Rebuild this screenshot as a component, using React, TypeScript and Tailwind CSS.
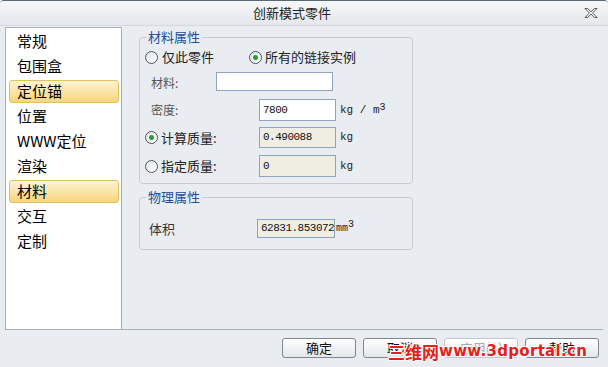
import React from 'react';

const CN = "font-['Noto_Sans_CJK_SC','Noto_Sans',sans-serif]";
const MONO = "font-['Liberation_Mono','DejaVu_Sans_Mono',monospace]";

const navItems = ['常规', '包围盒', '定位锚', '位置', 'WWW定位', '渲染', '材料', '交互', '定制'];
const activeItems = ['定位锚', '材料'];

function Radio({ checked }: { checked?: boolean }) {
  return (
    <span className="w-[13px] h-[13px] rounded-full border border-[#4d5866] bg-gradient-to-br from-[#dfe3e8] to-white flex items-center justify-center shrink-0">
      {checked && <span className="w-[5px] h-[5px] rounded-full bg-[#2f9a35]" />}
    </span>
  );
}

function Field({ value, width, readOnly }: { value: string; width: string; readOnly?: boolean }) {
  return (
    <div
      className={`${width} h-full border border-[#8ea4bd] px-[3px] flex items-center text-[11px] text-[#111] ${MONO} tracking-[-0.5px] ${
        readOnly ? 'bg-[#f0ede3]' : 'bg-white'
      }`}
    >
      {value}
    </div>
  );
}

function Unit({ children }: { children: React.ReactNode }) {
  return <span className={`ml-[4px] text-[11px] text-[#222] ${MONO}`}>{children}</span>;
}

function Button({ label, disabled }: { label: string; disabled?: boolean }) {
  return (
    <div
      className={`w-[74px] h-[20px] rounded-[3px] border flex items-center justify-center text-[13px] bg-gradient-to-b from-white to-[#e4e7eb] ${
        disabled ? 'border-[#c3c8ce] text-[#a7acb2]' : 'border-[#7d8793] text-[#111]'
      }`}
    >
      {label}
    </div>
  );
}

export default function App() {
  return (
    <div className={`w-[608px] h-[367px] bg-[#e9ecf0] flex flex-col relative overflow-hidden border-t border-[#5c6774] rounded-t-[4px] ${CN}`}>
      {/* title bar */}
      <div className="h-[25px] bg-gradient-to-b from-[#f6f7f9] to-[#e4e7eb] border-b border-[#d5d9de] flex items-center shrink-0">
        <div className="flex-1 pl-[253px] text-[13px] text-[#222]">创新模式零件</div>
        <svg width="14" height="12" viewBox="0 0 14 12" className="mr-[10px]">
          <path
            d="M1 1.5 L3.5 1.5 L7 4.8 L10.5 1.5 L13 1.5 L8.6 6 L13 10.5 L10.5 10.5 L7 7.2 L3.5 10.5 L1 10.5 L5.4 6 Z"
            fill="#fff"
            stroke="#444"
            strokeWidth="0.9"
          />
        </svg>
      </div>

      {/* body */}
      <div className="mx-[5px] mt-[1px] mr-[5px] h-[303px] flex border-b border-[#a9b1bb]">
        <div className="w-[117px] bg-white border-l border-t border-r border-[#a3b0c2] pt-[1px] flex flex-col">
          {navItems.map((item) => {
            const active = activeItems.includes(item);
            return (
              <div key={item} className="h-[25px] py-[1px] px-[3px] pr-[2px]">
                <div
                  className={`h-full flex items-center px-[7px] text-[15px] text-black rounded-[3px] border ${
                    active
                      ? 'border-[#e2bf62] bg-gradient-to-b from-[#fdf4d2] to-[#f7d57a]'
                      : 'border-transparent'
                  }`}
                >
                  {item}
                </div>
              </div>
            );
          })}
        </div>

        <div className="flex-1 pl-[17px] pt-[2px]">
          {/* material properties */}
          <fieldset className="w-[274px] border border-[#c7ccd3] rounded-[4px] pl-[5px] pb-[6px]">
            <legend className="ml-[1px] px-[2px] text-[13px] leading-[16px] text-[#1c4f9e]">材料属性</legend>
            <div className="h-[20px] mt-[2px] flex items-center text-[13px] text-[#222]">
              <Radio />
              <span className="ml-[4px]">仅此零件</span>
              <span className="ml-[35px]"><Radio checked /></span>
              <span className="ml-[3px]">所有的链接实例</span>
            </div>
            <div className="h-[19px] mt-[5px] flex items-center">
              <span className="w-[71px] pl-[6px] pt-[3px] text-[12px] text-[#555]">材料:</span>
              <Field value="" width="w-[117px]" />
            </div>
            <div className="h-[22px] mt-[8px] flex items-center">
              <span className="w-[114px] pl-[6px] text-[12px] text-[#555]">密度:</span>
              <Field value="7800" width="w-[77px]" />
              <Unit>
                kg / m<sup className="text-[10px] relative -top-[3px]">3</sup>
              </Unit>
            </div>
            <div className="h-[21px] mt-[6px] flex items-center">
              <div className="w-[114px] flex items-center text-[13px] text-[#222]">
                <Radio checked />
                <span className="ml-[3px]">计算质量:</span>
              </div>
              <Field value="0.490088" width="w-[77px]" readOnly />
              <Unit>kg</Unit>
            </div>
            <div className="h-[22px] mt-[7px] flex items-center">
              <div className="w-[114px] flex items-center text-[13px] text-[#222]">
                <Radio />
                <span className="ml-[3px]">指定质量:</span>
              </div>
              <Field value="0" width="w-[77px]" readOnly />
              <Unit>kg</Unit>
            </div>
          </fieldset>

          {/* physical properties */}
          <fieldset className="w-[274px] mt-[5px] border border-[#c7ccd3] rounded-[4px] pl-[5px] pb-[11px]">
            <legend className="ml-[1px] px-[2px] text-[13px] leading-[16px] text-[#1c4f9e]">物理属性</legend>
            <div className="h-[19px] mt-[14px] flex items-center">
              <span className="w-[112px] pl-[4px] text-[13px] text-[#333]">体积</span>
              <Field value="62831.853072" width="w-[78px]" readOnly />
              <span className={`ml-[1px] text-[10px] text-[#222] ${MONO}`}>
                mm<sup className="text-[10px] relative -top-[4px]">3</sup>
              </span>
            </div>
          </fieldset>
        </div>
      </div>

      {/* buttons */}
      <div className="mt-[8px] pr-[9px] flex justify-end gap-[7px]">
        <Button label="确定" />
        <Button label="取消" />
        <Button label="应用(A)" disabled />
        <Button label="帮助" />
      </div>

      {/* watermark */}
      <div className="absolute left-[388px] top-[340px] flex items-center h-[21px] font-bold text-[#e3211b] [text-shadow:1px_0_0_#fff,-1px_0_0_#fff,0_1px_0_#fff,0_-1px_0_#fff,1px_1px_0_#fff,-1px_-1px_0_#fff]">
        <span className="text-[17px]">三维网</span>
        <span className="text-[15px] tracking-[0.3px] font-['DejaVu_Sans',sans-serif]">www.3dportal.cn</span>
      </div>
    </div>
  );
}
